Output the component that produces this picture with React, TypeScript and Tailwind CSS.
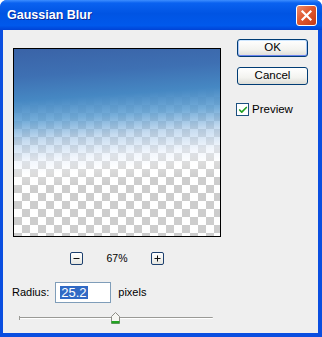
import { Check } from "lucide-react";

const CloseButton = () => (
  <div className="mr-[5px] flex h-[21px] w-[21px] items-center justify-center rounded-[3px] border border-white bg-[linear-gradient(135deg,#ec8b6c_0%,#e0592f_45%,#c53a16_100%)]">
    <svg width="13" height="13" viewBox="0 0 13 13">
      <path d="M2.5 2.5 L10.5 10.5 M10.5 2.5 L2.5 10.5" stroke="white" strokeWidth="2.2" strokeLinecap="square" />
    </svg>
  </div>
);

const XpButton = ({ label, isDefault }: { label: string; isDefault?: boolean }) => (
  <div
    className={
      isDefault
        ? "flex h-[18px] w-[71px] items-center justify-center rounded-[3px] border border-[#003c74] bg-[linear-gradient(180deg,#ffffff_0%,#f3f3ef_60%,#dcdcd6_100%)] text-[11.5px] text-black shadow-[inset_0_1px_0_#cee7ff,inset_0_-1px_0_#6982ee,inset_1px_0_0_#a9c6f8,inset_-1px_0_0_#a9c6f8]"
        : "flex h-[18px] w-[71px] items-center justify-center rounded-[3px] border border-[#003c74] bg-[linear-gradient(180deg,#ffffff_0%,#f3f3ef_60%,#dcdcd6_100%)] text-[11.5px] text-black"
    }
  >
    {label}
  </div>
);

const ZoomButton = ({ sign }: { sign: "-" | "+" }) => (
  <div className="flex h-[13px] w-[13px] items-center justify-center rounded-[2px] border border-[#1c3f6e] bg-[linear-gradient(180deg,#ffffff,#e6e6e0)]">
    <svg width="7" height="7" viewBox="0 0 7 7">
      <path d="M0.5 3.5 H6.5" stroke="#111" strokeWidth="1" />
      {sign === "+" && <path d="M3.5 0.5 V6.5" stroke="#111" strokeWidth="1" />}
    </svg>
  </div>
);

const SliderThumb = () => (
  <svg width="9" height="12" viewBox="0 0 9 12">
    <path d="M0.5 4.5 L4.5 0.5 L8.5 4.5 L8.5 11.5 L0.5 11.5 Z" fill="#f6f6f2" stroke="#8c8c86" />
    <rect x="0.5" y="9" width="8" height="2.5" fill="#22a322" />
  </svg>
);

export default function App() {
  return (
    <div className="h-[337px] w-[322px] bg-white font-['Liberation_Sans',Arial,sans-serif]">
      <div className="flex h-full flex-col overflow-hidden rounded-t-[7px] bg-[#0a4ee0]">
        {/* title bar */}
        <div className="flex h-[30px] shrink-0 items-center justify-between bg-[linear-gradient(180deg,#3d8eff_0%,#0a62f0_10%,#0054e3_45%,#0059ec_85%,#0043d6_100%)]">
          <span className="ml-[7px] text-[12.5px] font-bold text-white [text-shadow:1px_1px_#0a2a9a]">
            Gaussian Blur
          </span>
          <CloseButton />
        </div>

        {/* body */}
        <div className="mb-[4px] ml-[3px] mr-[4px] flex-1 bg-[#efefef] text-black">
          <div className="flex items-start">
            <div className="ml-[10px] mt-[18px] flex flex-col">
              <div className="h-[189px] w-[208px] border border-black bg-[repeating-conic-gradient(#cdcdcd_0%_25%,#ffffff_0%_50%)] bg-[length:16px_16px]">
                <div className="h-full w-full bg-[linear-gradient(176deg,#3a63a7_0%,#3e70b3_14%,#4688c3_26%,rgba(92,158,210,0.85)_36%,rgba(160,196,230,0.6)_46%,rgba(232,240,251,0.6)_56%,rgba(255,255,255,0.3)_63%,rgba(255,255,255,0)_70%)]" />
              </div>
              <div className="mt-[15px] flex items-center justify-center">
                <ZoomButton sign="-" />
                <span className="w-[68px] text-center text-[10.5px] leading-[13px]">67%</span>
                <ZoomButton sign="+" />
              </div>
            </div>

            <div className="ml-[15px] mt-[9px] flex flex-col">
              <div className="ml-[1px] flex flex-col gap-[10px]">
                <XpButton label="OK" isDefault />
                <XpButton label="Cancel" />
              </div>
              <div className="mt-[16px] flex items-center gap-[3px]">
                <div className="flex h-[13px] w-[13px] items-center justify-center border border-[#1c5180] bg-white">
                  <Check className="h-[10px] w-[10px] text-[#21a121]" strokeWidth={4} />
                </div>
                <span className="text-[11.5px]">Preview</span>
              </div>
            </div>
          </div>

          {/* radius */}
          <div className="ml-[9px] mt-[17px] flex items-center">
            <span className="text-[11px]">Radius:</span>
            <div className="ml-[6px] flex h-[21px] w-[56px] items-center border border-[#7f9db9] bg-white pl-[4px]">
              <span className="bg-[#316ac5] px-[1px] text-[13px] leading-[13px] text-white">25.2</span>
            </div>
            <span className="ml-[7px] text-[11px]">pixels</span>
          </div>

          {/* slider */}
          <div className="relative ml-[16px] mt-[9px] h-[12px] w-[194px]">
            <div className="absolute left-0 top-[5px] h-[2px] w-full rounded-r-[1px] border-t border-[#9a9a96] bg-white" />
            <div className="absolute left-0 top-[4px] h-[4px] w-[1px] bg-[#9a9a96]" />
            <div className="absolute left-[92px] top-0">
              <SliderThumb />
            </div>
          </div>
        </div>
      </div>
    </div>
  );
}
